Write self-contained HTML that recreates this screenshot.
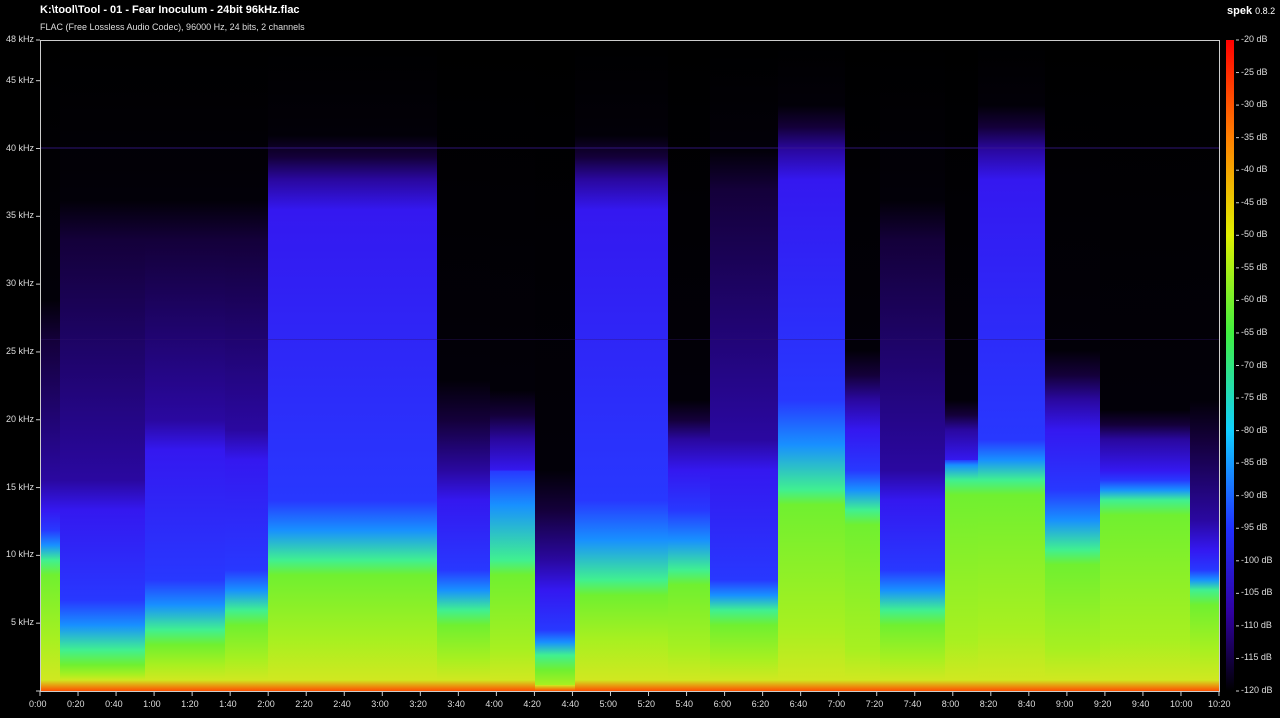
<!DOCTYPE html><html><head><style>
body{margin:0;background:#000;width:1280px;height:718px;overflow:hidden;font-family:"Liberation Sans",sans-serif;color:#fff}
.t{position:absolute;font-size:9px;color:#ddd;white-space:nowrap}
</style></head><body>
<div style="position:absolute;left:40px;top:4px;font-size:11px;font-weight:bold">K:\tool\Tool - 01 - Fear Inoculum - 24bit 96kHz.flac</div>
<div style="position:absolute;left:40px;top:22px;font-size:9px;color:#ddd">FLAC (Free Lossless Audio Codec), 96000 Hz, 24 bits, 2 channels</div>
<div style="position:absolute;left:1227px;top:5px;font-size:11px"><b>spek</b> <span style="font-size:9px">0.8.2</span></div>
<svg id="s" width="1280" height="718" style="position:absolute;left:0;top:0"></svg>
<div id="lab"></div>
<script>
var segs=[
[40,60,300,480,530,560,640],
[60,145,200,480,600,650,675],
[145,225,200,420,580,630,665],
[225,268,200,430,570,610,660],
[268,437,135,180,500,560,640],
[437,490,380,470,570,610,660],
[490,535,390,440,450,560,650],
[535,575,470,560,630,655,685],
[575,668,135,180,500,580,640],
[668,710,400,440,510,570,650],
[710,778,150,440,580,610,660],
[778,845,105,150,400,490,630],
[845,880,350,400,470,510,650],
[880,945,200,470,570,610,660],
[945,978,400,430,450,480,640],
[978,1045,105,150,440,480,630],
[1045,1100,350,400,490,550,650],
[1100,1190,410,440,480,500,640],
[1190,1219,400,520,570,590,650]];
var s='<defs>';var b='';
function o(y){return Math.min(1,(y-40)/651)}
segs.forEach(function(g,i){
var st=[[0,'#000'],[g[2],'#020008'],[Math.min(g[2]+40,(g[2]+g[3])/2),'#14003a'],[g[3],'#2a08a0'],[g[3]+30,'#3418f0'],[g[4],'#2838ff'],[(g[4]+g[5])/2,'#1890ff'],[g[5],'#40f090'],[g[5]+15,'#70f030'],[g[6],'#a8f020'],[680,'#d0e820'],[691,'#ff5000']];
var last=0,h='';
st.forEach(function(p,j){var v=j==0?0:o(p[0]);if(v<last)v=last;last=v;h+='<stop offset="'+v.toFixed(3)+'" stop-color="'+p[1]+'"/>';});
s+='<linearGradient id="g'+i+'" gradientUnits="userSpaceOnUse" x1="0" y1="40" x2="0" y2="691">'+h+'</linearGradient>';
b+='<rect x="'+g[0]+'" y="40" width="'+(g[1]-g[0])+'" height="651" fill="url(#g'+i+')"/>';
});
s+='<linearGradient id="cb" x1="0" y1="0" x2="0" y2="1"><stop offset="0" stop-color="#f00"/><stop offset="0.15" stop-color="#ff8000"/><stop offset="0.3" stop-color="#e0f000"/><stop offset="0.45" stop-color="#40f040"/><stop offset="0.6" stop-color="#10d0ff"/><stop offset="0.75" stop-color="#2030ff"/><stop offset="0.88" stop-color="#3000a0"/><stop offset="1" stop-color="#000"/></linearGradient></defs>';
s+=b;
s+='<rect x="40" y="147" width="1179" height="2" fill="#3a1890" opacity="0.4"/><rect x="40" y="339" width="1179" height="1" fill="#301070" opacity="0.35"/>';
s+='<rect x="1226" y="40" width="8" height="651" fill="url(#cb)"/>';
s+='<path d="M40.5 40V691.5H1219.5V40M40 40.5H1219" stroke="#ccc" fill="none"/>';
var L='';
for(var k=0;k<=9;k++){var f=k==0?48:50-k*5;var y=691-f*651/48;
s+='<line x1="36" x2="40" y1="'+y+'" y2="'+y+'" stroke="#ccc"/>';
L+='<div class="t" style="right:1246px;top:'+(y-6)+'px">'+f+' kHz</div>';}
s+='<line x1="36" x2="40" y1="691" y2="691" stroke="#ccc"/>';
for(var t=0;t<=31;t++){var x=40+t*1179/31;var m=Math.floor(t*20/60),sec=t*20%60;
s+='<line y1="691" y2="696" x1="'+x+'" x2="'+x+'" stroke="#ccc"/>';
L+='<div class="t" style="left:'+(x-11)+'px;top:699px">'+m+':'+(sec<10?'0':'')+sec+'</div>';}
for(var d=0;d<=20;d++){var y=40+d*651/20;
s+='<line x1="1236" x2="1239" y1="'+y+'" y2="'+y+'" stroke="#ccc"/>';
L+='<div class="t" style="left:1241px;top:'+(y-6)+'px">-'+(20+d*5)+' dB</div>';}
document.getElementById('s').innerHTML=s;document.getElementById('lab').innerHTML=L;
</script>
</body></html>
